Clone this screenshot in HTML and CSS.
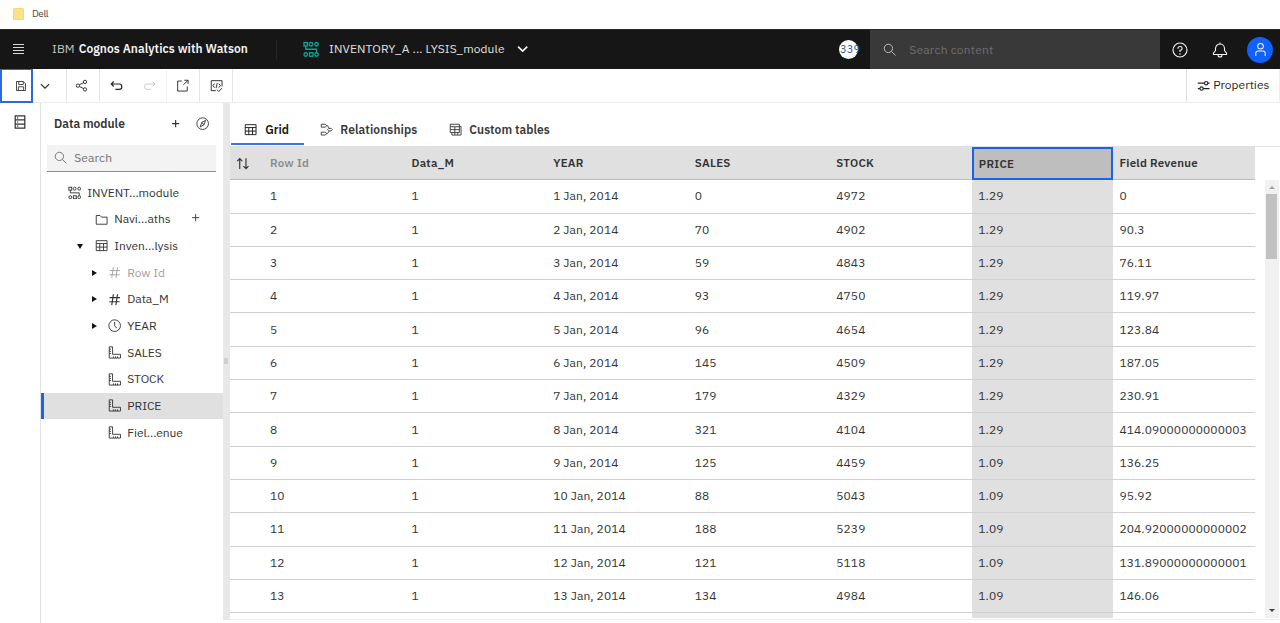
FILE: index.html
```html
<!DOCTYPE html>
<html lang="en">
<head>
<meta charset="utf-8">
<title>IBM Cognos Analytics with Watson</title>
<link rel="stylesheet" href="styles.css">
</head>
<body>
<svg class="sprite" aria-hidden="true">
  <symbol id="save" viewBox="0 0 32 32"><path d="M4 4h18l6 6v18H4zM10 4v8h12V4M9 28V18h14v10"/></symbol>
  <symbol id="chevron" viewBox="0 0 32 32"><path d="M5 11l11 11 11-11"/></symbol>
  <symbol id="share" viewBox="0 0 32 32"><circle cx="7" cy="16" r="4"/><circle cx="24" cy="7" r="4"/><circle cx="24" cy="25" r="4"/><path d="M10.500 14l10-5M10.500 18l10 5"/></symbol>
  <symbol id="undo" viewBox="0 0 32 32"><path d="M9 6l-6 6 6 6M3 12h19a6 6 0 0 1 0 13h-9"/></symbol>
  <symbol id="redo" viewBox="0 0 32 32"><path d="M23 6l6 6-6 6M29 12H10a6 6 0 0 0 0 13h9"/></symbol>
  <symbol id="launch" viewBox="0 0 32 32"><path d="M14 5H4v24h23V18M20 3h9v9M18 14L29 3"/></symbol>
  <symbol id="validate" viewBox="0 0 32 32"><path d="M14 28H3V4h26v14M11 11l-4 5 4 5M21 11l4 5-4 5M17.500 10l-3 12M17 26l4 4 8-8"/></symbol>
  <symbol id="module" viewBox="0 0 32 32"><rect x="2" y="3" width="7" height="7"/><circle cx="16" cy="6.500" r="3.500"/><circle cx="27" cy="6.500" r="3.500"/><circle cx="5.500" cy="27" r="3.500"/><rect x="13" y="23.500" width="7" height="7"/><circle cx="27" cy="27" r="3.500"/><path d="M5.500 10v6.500H27v7"/></symbol>
  <symbol id="search" viewBox="0 0 32 32"><circle cx="13" cy="13" r="10"/><path d="M20 20l10 10"/></symbol>
  <symbol id="help" viewBox="0 0 32 32"><circle cx="16" cy="16" r="14"/><path d="M12 13.500V13a4 4 0 0 1 4-4h.5a3.700 3.700 0 0 1 0 7.500H16V20M16 22.500v3"/></symbol>
  <symbol id="bell" viewBox="0 0 32 32"><path d="M16 1v4M3 25v-3l4-5v-4a9 9 0 0 1 18 0v4l4 5v3zM12 26a4 4 0 0 0 8 0"/></symbol>
  <symbol id="user" viewBox="0 0 32 32"><circle cx="16" cy="9" r="6"/><path d="M6 30v-6a5 5 0 0 1 5-5h10a5 5 0 0 1 5 5v6"/></symbol>
  <symbol id="sliders" viewBox="0 0 32 32"><path d="M2 10h16M26 10h4M2 23h5M15 23h15"/><circle cx="22" cy="10" r="4"/><circle cx="11" cy="23" r="4"/></symbol>
  <symbol id="source" viewBox="0 0 32 32"><path d="M5 2h22v28H5zM5 11h22M5 21h22M9 6.500h3M9 16h3M9 25.500h3"/></symbol>
  <symbol id="compass" viewBox="0 0 32 32"><circle cx="16" cy="16" r="14"/><path d="M23 8l-4 11-9 5 4-11zM14 13l5 6"/></symbol>
  <symbol id="plus" viewBox="0 0 32 32"><path d="M16 7.500v17M7.500 16h17"/></symbol>
  <symbol id="folder" viewBox="0 0 32 32"><path d="M3 6h9l4 4h13v17H3z"/></symbol>
  <symbol id="table" viewBox="0 0 32 32"><path d="M3 4h26v24H3zM3 11h26M3 19.500h26M11.500 11v17M20.500 11v17"/></symbol>
  <symbol id="hash" viewBox="0 0 32 32"><path d="M13 3L9 29M23 3l-4 26M4 11h25M3 21h25"/></symbol>
  <symbol id="clock" viewBox="0 0 32 32"><circle cx="16" cy="16" r="14"/><path d="M16 7v9l5 6"/></symbol>
  <symbol id="ruler" viewBox="0 0 32 32"><path d="M3 2h8v18h19v9H3zM3 8h4M3 13h4M3 18h4M13 29v-4M18 29v-4M23 29v-4"/></symbol>
  <symbol id="relation" viewBox="0 0 32 32"><path d="M3 3h10l3 3.500-3 3.500H3zM3 22h10l3 3.500-3 3.500H3zM21 13h6l3 3-3 3h-6l-3-3zM16 6.500h2l4 6M16 25.500h2l4-6"/></symbol>
  <symbol id="custom" viewBox="0 0 32 32"><path d="M3 3h22v20H3zM3 9h22M3 16h22M14 9v14M7 23v6h22V8h-4M14 23v6M21 23v6"/></symbol>
  <symbol id="sort" viewBox="0 0 32 32"><path d="M9 29V4M3 10l6-6 6 6M24 3v25M18 22l6 6 6-6"/></symbol>
</svg>

<div class="bookmarks"><span class="bm-folder"></span><span class="bm-name">Dell</span></div>

<header class="header">
  <button class="menu" aria-label="Menu"><i></i><i></i><i></i><i></i></button>
  <div class="brand"><span class="ibm">IBM</span><b>Cognos Analytics with Watson</b></div>
  <div class="switcher">
    <svg class="icon teal"><use href="#module"/></svg>
    <span class="module-name">INVENTORY_A ... LYSIS_module</span>
    <svg class="icon bold"><use href="#chevron"/></svg>
  </div>
  <span class="count"><span>339</span></span>
  <div class="global-search"><svg class="icon"><use href="#search"/></svg><span>Search content</span></div>
  <div class="actions">
    <svg class="icon"><use href="#help"/></svg>
    <svg class="icon"><use href="#bell"/></svg>
    <span class="avatar"><svg class="icon"><use href="#user"/></svg></span>
  </div>
</header>

<nav class="toolbar">
  <span class="tool save"><svg class="icon"><use href="#save"/></svg></span>
  <span class="tool more"><svg class="icon"><use href="#chevron"/></svg></span>
  <span class="tool line share"><svg class="icon"><use href="#share"/></svg></span>
  <span class="tool"><svg class="icon bold"><use href="#undo"/></svg></span>
  <span class="tool off line faint"><svg class="icon"><use href="#redo"/></svg></span>
  <span class="tool line"><svg class="icon"><use href="#launch"/></svg></span>
  <span class="tool line"><svg class="icon"><use href="#validate"/></svg></span>
  <span class="properties"><svg class="icon bold"><use href="#sliders"/></svg><span>Properties</span></span>
</nav>

<main class="workspace">
  <aside class="rail"><svg class="icon bold"><use href="#source"/></svg></aside>
  <section class="panel">
    <div class="panel-head"><b>Data module</b><svg class="icon bold add"><use href="#plus"/></svg><svg class="icon"><use href="#compass"/></svg></div>
    <div class="search"><svg class="icon"><use href="#search"/></svg><span>Search</span></div>
    <ul class="tree">
      <li class="l0"><svg class="icon"><use href="#module"/></svg><span>INVENT...module</span></li>
      <li class="l1"><span class="arrow"></span><svg class="icon"><use href="#folder"/></svg><span class="label nav">Navi...aths</span><svg class="icon row-add"><use href="#plus"/></svg></li>
      <li class="l1"><span class="arrow open"></span><svg class="icon"><use href="#table"/></svg><span class="label">Inven...lysis</span></li>
      <li class="l2 dim"><span class="arrow closed"></span><svg class="icon"><use href="#hash"/></svg><span>Row Id</span></li>
      <li class="l2"><span class="arrow closed"></span><svg class="icon bold"><use href="#hash"/></svg><span>Data_M</span></li>
      <li class="l2"><span class="arrow closed"></span><svg class="icon"><use href="#clock"/></svg><span>YEAR</span></li>
      <li class="l2"><span class="arrow"></span><svg class="icon"><use href="#ruler"/></svg><span>SALES</span></li>
      <li class="l2"><span class="arrow"></span><svg class="icon"><use href="#ruler"/></svg><span>STOCK</span></li>
      <li class="l2 selected"><span class="arrow"></span><svg class="icon"><use href="#ruler"/></svg><span>PRICE</span></li>
      <li class="l2"><span class="arrow"></span><svg class="icon"><use href="#ruler"/></svg><span>Fiel...enue</span></li>
    </ul>
  </section>
  <div class="splitter"><i></i></div>
  <section class="content">
    <div class="tabs">
      <span class="tab active"><svg class="icon"><use href="#table"/></svg><span>Grid</span></span>
      <span class="tab rel"><svg class="icon"><use href="#relation"/></svg><span>Relationships</span></span>
      <span class="tab cus"><svg class="icon"><use href="#custom"/></svg><span>Custom tables</span></span>
    </div>
    <div class="grid-area">
      <div class="grid" id="grid">
        <div class="row head">
          <span class="sort"><svg class="icon bold"><use href="#sort"/></svg></span>
          <span class="dim">Row Id</span><span>Data_M</span><span>YEAR</span><span>SALES</span><span>STOCK</span><span class="picked">PRICE</span><span>Field Revenue</span>
        </div>
      </div>
      <div class="scrollbar"><i class="up"></i><i class="thumb"></i><i class="down"></i></div>
    </div>
  </section>
</main>
<script src="grid.js"></script>
</body>
</html>
```
FILE: styles.css
```css
* { box-sizing: border-box; }
body {
  margin: 0; width: 1280px; height: 623px; overflow: hidden;
  display: flex; flex-direction: column;
  background: #fff; color: #333;
  font: 12px/16px "IBM Plex Sans", Inter, "Noto Sans", sans-serif;
}
b { font-weight: 600; }
.sprite { position: absolute; width: 0; height: 0; }
.icon { width: 13.3px; height: 13.3px; flex: none; fill: none; stroke: currentColor; stroke-width: 2.2; }
.icon.bold { stroke-width: 2.8; }

.bookmarks { height: 29px; flex: none; display: flex; align-items: center; padding: 0 0 1px 13px; }
.bm-folder { width: 11px; height: 12px; border-radius: 1px; background: #fde28a; border: 1px solid #f8d775; }
.bm-name { margin-left: 8px; font-size: 10px; letter-spacing: -.35px; color: #444; }

.header { height: 40px; flex: none; display: flex; align-items: center; background: #161616; color: #f4f4f4; border-top: 1px solid #262c29; }
.menu { width: 37px; padding: 0 0 2px 13px; border: 0; background: none; display: grid; gap: 2px; }
.menu i { width: 11px; height: 1px; background: #d8d8d8; }
.brand { width: 225px; height: 20px; margin-left: 15px; display: flex; align-items: center; gap: 4px; white-space: nowrap; border-right: 1px solid #262626; padding-bottom: 1px; }
.brand b { letter-spacing: .06px; }
.ibm { color: #c6c6c6; letter-spacing: .1px; }
.switcher { display: flex; align-items: center; margin-left: 26px; width: 536px; white-space: nowrap; padding-bottom: 1px; }
.switcher .teal { color: #08a59a; width: 16px; height: 16px; margin-right: 10px; stroke-width: 2.6; }
.module-name { letter-spacing: .1px; width: 176px; color: #e0e0e0; }
.switcher .bold { margin-left: 11px; stroke-width: 4; }
.count { width: 19px; height: 19px; border-radius: 50%; background: #fff; color: #2c5ba0; display: flex; align-items: center; white-space: nowrap; font-size: 11px; padding: 0 0 1px 1px; }
.count span { letter-spacing: .1px; }
.global-search { margin-left: 12px; width: 290px; height: 39px; background: #393939; display: flex; align-items: center; gap: 13px; padding-left: 13px; color: #6f6f6f; letter-spacing: .2px; }
.global-search .icon { color: #c6c6c6; }
.actions { display: flex; align-items: center; margin-left: 12px; }
.actions > .icon { width: 16px; height: 16px; margin-right: 24px; }
.avatar { width: 26px; height: 26px; margin-left: -5px; border-radius: 50%; background: #0f62fe; display: grid; place-items: center; }
.avatar .icon { width: 15px; height: 15px; }

.toolbar { height: 34px; flex: none; display: flex; border-bottom: 1px solid #ececec; color: #262626; }
.tool { width: 33.3px; display: grid; place-items: center; }
.tool.save { width: 33px; border: 2px solid #2a6ae0; padding-left: 8px; border-top-width: 1px; height: 34px; }
.tool.save .icon { width: 12px; height: 12px; }
.tool.more { width: 34px; border-right: 1px solid #e5e5e5; padding-right: 9px; }
.tool.more .icon { width: 12px; height: 12px; stroke-width: 3; }
.tool.line { border-right: 1px solid #e5e5e5; }
.tool.share { padding-right: 3px; }
.tool.faint { border-right-color: #f2f2f2; }
.tool.off { color: #c6c6c6; }
.properties { margin-left: auto; width: 94px; border-left: 1px solid #e0e0e0; border-right: 1px solid #eee; display: flex; align-items: center; gap: 3px; padding-left: 10px; }
.properties span { letter-spacing: .02px; padding-bottom: 1px; }

.workspace { flex: 1; min-height: 0; display: flex; }
.rail { width: 41px; border-right: 1px solid #e0e0e0; padding: 11.500px 0 0 13px; }
.rail .icon { width: 14px; height: 14px; }
.panel { width: 182px; }
.panel-head { height: 42px; display: flex; align-items: center; padding: 0 14px 0 13px; }
.panel-head .add { margin-left: auto; margin-right: 13px; }
.panel-head b { letter-spacing: 0; }
.search { height: 27px; margin: 0 7px 0 6px; background: #f3f3f3; border-bottom: 1px solid #8d8d8d; display: flex; align-items: center; gap: 7px; padding-left: 7px; color: #707070; letter-spacing: .1px; }
.tree { list-style: none; margin: 7.500px 0 0; padding: 0; }
.tree li { height: 26.67px; display: flex; align-items: center; white-space: nowrap; gap: 6.5px; letter-spacing: -.05px; color: #333; }
.tree li.l0 { padding-left: 26.500px; }
.tree li.l1 { padding-left: 36px; }
.tree li.l2 { padding-left: 49px; }
.tree li.dim { color: #a0a0a0; }
.tree li.selected { background: #e0e0e0; box-shadow: inset 3px 0 #1a62f0; }
.arrow { width: 11px; display: flex; }
.arrow.open::before { content: ""; border: 3.5px solid transparent; border-top: 5px solid #161616; border-bottom: 0; }
.arrow.closed::before { content: ""; margin-left: 2px; border: 3.5px solid transparent; border-left: 5px solid #161616; border-right: 0; }
.nav { width: 68px; }
.row-add { margin-top: -3px; }

.splitter { width: 7px; height: 517px; background: #e8e8e8; display: grid; place-items: center; padding: 0 2px 2px 0; }
.splitter i { width: 4px; height: 6px; background: #cfcfcf; }
.content { flex: 1; min-width: 0; height: 517px; border-bottom: 1px solid #eee; }
.tabs { height: 42px; display: flex; font-weight: 600; color: #393939; }
.tab { display: flex; align-items: center; gap: 7px; padding-top: 13px; }
.tab.active { width: 73px; margin-left: 1px; padding-left: 13px; gap: 8px; color: #161616; border-bottom: 2px solid #3b76e0; }
.tab.rel { margin-left: 16px; width: 129px; padding-bottom: 2px; letter-spacing: .1px; }
.tab.cus { padding-bottom: 2px; letter-spacing: .05px; }
.grid-area { height: 474px; border-top: 1px solid #e0e0e0; display: flex; margin-top: 1px; }
.grid { width: 1025px; height: 471px; overflow: hidden; }
.row { height: 33.3px; display: grid; grid-template-columns: 34px repeat(7, 141.57px); letter-spacing: .1px; }
.row > span { border-bottom: 1px solid #d0d0d0; padding-left: 6px; display: flex; align-items: center; white-space: nowrap; }
.row.head { font-weight: 600; }
.row.head > span { background: #e0e0e0; border-bottom-color: #bdbdbd; font-size: 11.5px; letter-spacing: .25px; }
.row.head > .dim { color: #8d8d8d; }
.row > .price { background: #e0e0e0; border-bottom-color: #d0d0d0; padding-left: 6.5px; }
.row.head > .picked { background: #bebebe; border: 2px solid #1a62e8; padding-left: 5px; }
.scrollbar { width: 14px; margin: 33px 0 0 9.500px; background: #f1f1f1; display: flex; flex-direction: column; align-items: center; height: 438px; }
.up { border: 3px solid transparent; border-top: 0; border-bottom: 3px solid #a3a3a3; margin: 6px 0 5px; }
.thumb { width: 11px; height: 65px; background: #c1c1c1; }
.down { border: 3px solid transparent; border-bottom: 0; border-top: 3px solid #404040; margin: auto 0 6px; }
```
FILE: grid.js
```js
const rows = [
  [0, 4972, '1.29', '0'], [70, 4902, '1.29', '90.3'], [59, 4843, '1.29', '76.11'],
  [93, 4750, '1.29', '119.97'], [96, 4654, '1.29', '123.84'], [145, 4509, '1.29', '187.05'],
  [179, 4329, '1.29', '230.91'], [321, 4104, '1.29', '414.09000000000003'],
  [125, 4459, '1.09', '136.25'], [88, 5043, '1.09', '95.92'],
  [188, 5239, '1.09', '204.92000000000002'], [121, 5118, '1.09', '131.89000000000001'],
  [134, 4984, '1.09', '146.06'], ['', '', '', '']
];
const grid = document.getElementById('grid');
rows.forEach(([sales, stock, price, revenue], i) => {
  const last = i === rows.length - 1;
  const row = document.createElement('div');
  row.className = 'row';
  const cells = ['', last ? '' : i + 1, last ? '' : 1, last ? '' : `${i + 1} Jan, 2014`, sales, stock, price, revenue];
  cells.forEach((value, column) => {
    const cell = document.createElement('span');
    cell.textContent = value;
    if (column === 6) cell.className = 'price';
    row.append(cell);
  });
  grid.append(row);
});
```
